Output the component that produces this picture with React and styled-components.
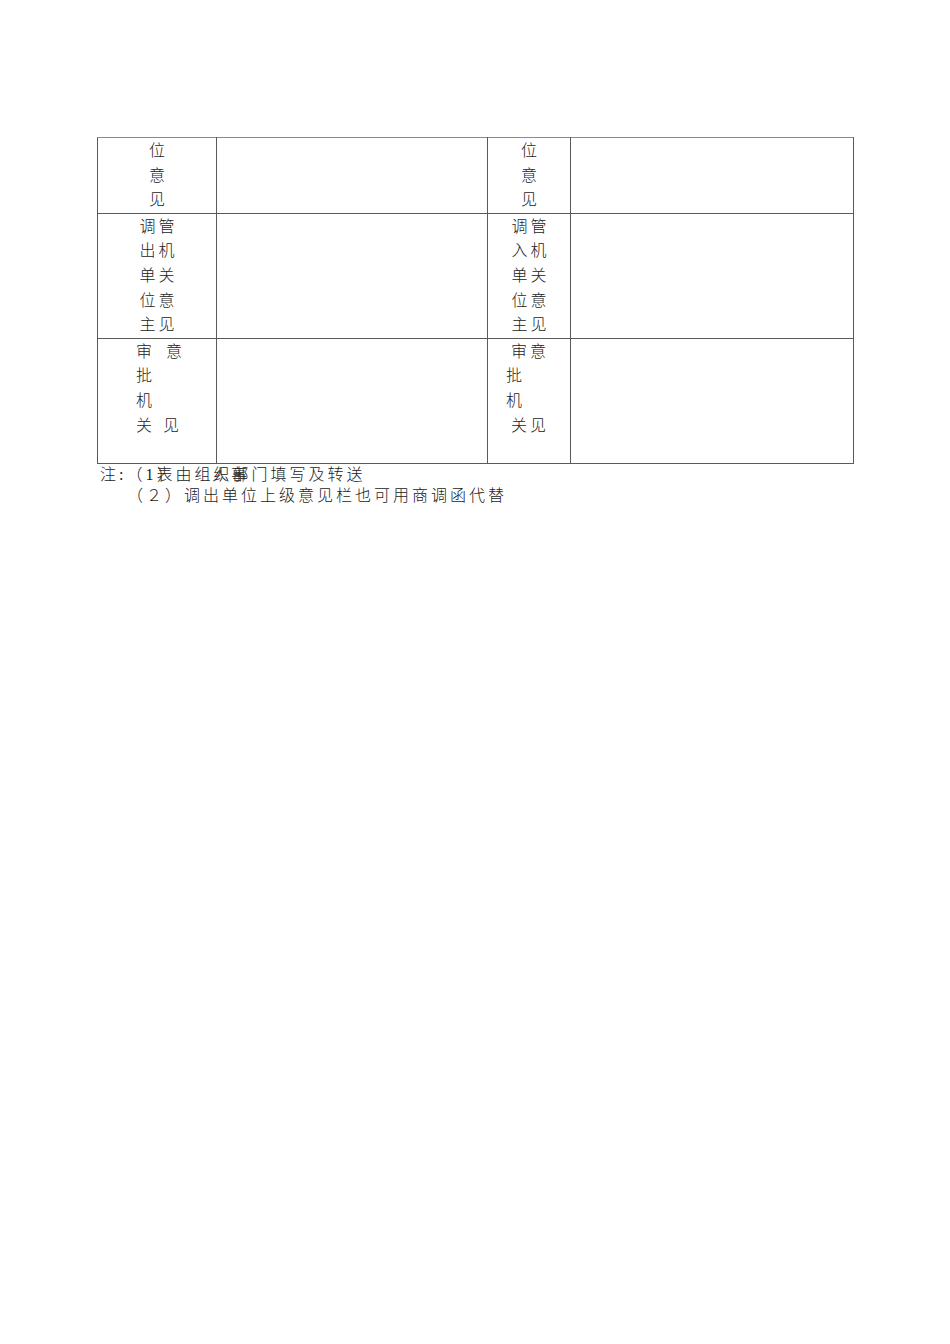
import React from 'react'
import styled, { createGlobalStyle } from 'styled-components'

const GlobalStyle = createGlobalStyle`
  html, body {
    margin: 0;
    padding: 0;
    background: #fff;
  }
  body {
    font-family: "Liberation Serif", "Noto Sans CJK SC", serif;
    font-weight: 300;
    color: #222;
  }
`

const Page = styled.div`
  width: 950px;
  min-height: 1344px;
  padding: 137px 0 0 97px;
  box-sizing: border-box;
`

const Table = styled.table`
  width: 756px;
  table-layout: fixed;
  border-collapse: collapse;
  font-size: 16px;
  letter-spacing: 3px;
`

const Row = styled.tr`
  height: ${props => props.$h}px;
`

const Cell = styled.td`
  border: 1px solid #5a5a5a;
  border-top-color: ${props => props.$top || '#5a5a5a'};
  padding: 1px 0 0 ${props => props.$pad || 0}px;
  vertical-align: top;
  text-align: ${props => props.$align || 'left'};
  line-height: 24.6px;
`

const Line = styled.div`
  padding-left: ${props => props.$indent || 0}px;
  white-space: nowrap;
`

const Gap = styled.span`
  display: inline-block;
  width: ${props => props.$w}px;
`

const Notes = styled.div`
  margin-left: 3px;
  font-size: 16px;
  letter-spacing: 3px;
  line-height: 21.5px;
`

const NoteLine = styled.div`
  position: relative;
  padding-left: ${props => props.$indent || 0}px;
  white-space: nowrap;
`

// the first note line in the source has a second run printed on top of it
const Overprint = styled.span`
  position: absolute;
  top: 0;
  left: ${props => props.$x}px;
`

const rows = [
  {
    h: 74,
    top: '#8a8a8a',
    left: ['位', '意', '见'],
    right: ['位', '意', '见'],
  },
  {
    h: 125,
    top: '#222',
    left: ['调管', '出机', '单关', '位意', '主见'],
    right: ['调管', '入机', '单关', '位意', '主见'],
  },
]

export default function App() {
  return (
    <Page>
      <GlobalStyle />
      <Table>
        <colgroup>
          <col style={{ width: 119 }} />
          <col style={{ width: 271 }} />
          <col style={{ width: 83 }} />
          <col style={{ width: 283 }} />
        </colgroup>
        <tbody>
          {rows.map((r, i) => (
            <Row key={i} $h={r.h}>
              <Cell $align="center" $pad={3} $top={r.top}>
                {r.left.map((t, j) => <Line key={j}>{t}</Line>)}
              </Cell>
              <Cell $top={r.top} />
              <Cell $align="center" $pad={3} $top={r.top}>
                {r.right.map((t, j) => <Line key={j}>{t}</Line>)}
              </Cell>
              <Cell $top={r.top} />
            </Row>
          ))}
          <Row $h={125}>
            <Cell $pad={38} $top="#666">
              <Line>审<Gap $w={11} />意</Line>
              <Line>批</Line>
              <Line>机</Line>
              <Line>关<Gap $w={8} />见</Line>
            </Cell>
            <Cell $top="#666" />
            <Cell $pad={18} $top="#666">
              <Line $indent={5}>审意</Line>
              <Line>批</Line>
              <Line>机</Line>
              <Line $indent={5}>关见</Line>
            </Cell>
            <Cell $top="#666" />
          </Row>
        </tbody>
      </Table>
      <Notes>
        <NoteLine>
          注:（1表由组织部门填写及转送
          <Overprint $x={57}>）</Overprint>
          <Overprint $x={112}>人事</Overprint>
        </NoteLine>
        <NoteLine $indent={27}>（２）调出单位上级意见栏也可用商调函代替</NoteLine>
      </Notes>
    </Page>
  )
}
